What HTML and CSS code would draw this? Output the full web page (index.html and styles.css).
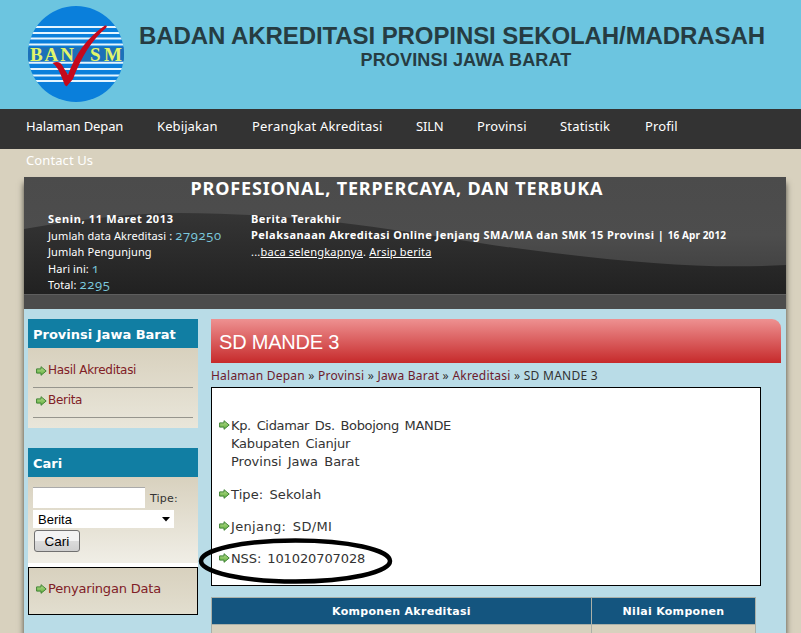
FILE: index.html
```html
<!DOCTYPE html>
<html lang="id">
<head>
    <meta charset="UTF-8">
    <title>SD MANDE 3 | Badan Akreditasi Propinsi Sekolah/Madrasah</title>
    <link rel="stylesheet" href="styles.css">
</head>
<body>
    <svg width="0" height="0" class="defs">
        <linearGradient id="green" x1="0" y1="0" x2="0" y2="1">
            <stop offset="0" stop-color="#b5dc8c"/>
            <stop offset="1" stop-color="#5fae3c"/>
        </linearGradient>
        <symbol id="arrow" viewBox="0 0 11 10">
            <path d="M.6 2.9H5V.7L10.2 5 5 9.3V7.1H.6z" fill="url(#green)" stroke="#3f8434" stroke-width="1"/>
        </symbol>
    </svg>

    <!-- Header -->
    <div class="header">
        <svg class="logo" width="98" height="98" viewBox="0 0 98 98">
            <clipPath id="disc"><circle cx="49" cy="49" r="48"/></clipPath>
            <circle cx="49" cy="49" r="48" fill="#0a7fdb"/>
            <g clip-path="url(#disc)">
                <path d="M0 22H98M0 28H98M0 33.5H98M0 39.5H98M0 57.7H98M0 64H98M0 70.5H98M0 76H98" stroke="#e4f5ff" stroke-width="2.2"/>
                <rect x="0" y="42" width="98" height="14.5" fill="#1c70b8"/>
            </g>
            <text x="3" y="55.5" class="logo-text" textLength="44" lengthAdjust="spacing">BAN</text>
            <text x="63" y="55.5" class="logo-text" textLength="32" lengthAdjust="spacing">SM</text>
            <path d="M25.500 58Q32 55 35 60L41 70Q52 38 78 20.500Q81 20 79 23Q58 41 46 74L40 81Q38 82 37 78Q31 61 25.500 58z" fill="#c4091c"/>
        </svg>
        <div class="titles">
            <h1>BADAN AKREDITASI PROPINSI SEKOLAH/MADRASAH</h1>
            <h2>PROVINSI JAWA BARAT</h2>
        </div>
    </div>

    <!-- Menu -->
    <ul class="menu">
        <li class="depan">Halaman Depan</li>
        <li class="kebijakan">Kebijakan</li>
        <li class="perangkat">Perangkat Akreditasi</li>
        <li class="siln">SILN</li>
        <li class="provinsi">Provinsi</li>
        <li class="statistik">Statistik</li>
        <li>Profil</li>
        <li>Contact Us</li>
    </ul>

    <div class="wrapper">
        <div class="banner">
            <svg class="wave" width="762" height="117" viewBox="0 0 762 117">
                <defs>
                    <linearGradient id="dark" x1="0" y1="0" x2="0" y2="1">
                        <stop offset="0" stop-color="#353535"/>
                        <stop offset="1" stop-color="#212121"/>
                    </linearGradient>
                </defs>
                <path d="M0 52Q90 36 155 36C320 37 400 61 530 76C620 87 690 92 762 88V117H0z" fill="url(#dark)"/>
            </svg>
            <div class="slogan">PROFESIONAL, TERPERCAYA, DAN TERBUKA</div>
            <div class="info">
                <div class="stats">
                    <div class="bold date">Senin, 11 Maret 2013</div>
                    <div>Jumlah data Akreditasi : <span class="num">279250</span></div>
                    <div>Jumlah Pengunjung</div>
                    <div>Hari ini: <span class="num">1</span></div>
                    <div>Total: <span class="num">2295</span></div>
                </div>
                <div class="news">
                    <div class="bold">Berita Terakhir</div>
                    <div class="bold headline">Pelaksanaan Akreditasi Online Jenjang SMA/MA dan SMK 15 Provinsi | <span class="small">16 Apr 2012</span></div>
                    <div class="more">...<u>baca selengkapnya</u>. <u>Arsip berita</u></div>
                </div>
            </div>
        </div>
        <div class="strip"></div>

        <div class="content">
            <!-- Sidebar -->
            <div class="sidebar">
                <div class="block">
                    <h3>Provinsi Jawa Barat</h3>
                    <ul class="links">
                        <li><svg class="icon" width="11" height="10"><use href="#arrow"/></svg><span>Hasil Akreditasi</span></li>
                        <li><svg class="icon" width="11" height="10"><use href="#arrow"/></svg><span>Berita</span></li>
                    </ul>
                </div>
                <div class="block cari">
                    <h3>Cari</h3>
                    <div class="search">
                        <div class="search-row"><span class="field"></span><span class="label">Tipe:</span></div>
                        <div class="select"><span>Berita</span><svg width="8" height="5" viewBox="0 0 8 5"><path d="M0 0H8L4 4.500z"/></svg></div>
                        <div class="button">Cari</div>
                    </div>
                </div>
                <div class="filter"><svg class="icon" width="11" height="10"><use href="#arrow"/></svg><span>Penyaringan Data</span></div>
            </div>

            <!-- Main -->
            <div class="main">
                <div class="title">SD MANDE 3</div>
                <div class="crumbs"><a>Halaman Depan</a> » <a>Provinsi</a> » <a>Jawa Barat</a> » <a>Akreditasi</a> » SD MANDE 3</div>
                <div class="detail">
                    <div class="item"><svg class="icon" width="11" height="10"><use href="#arrow"/></svg>
                        <div><span class="alamat">Kp. Cidamar Ds. Bobojong MANDE</span><br><span class="kabupaten">Kabupaten Cianjur</span><br>Provinsi Jawa Barat</div></div>
                    <div class="item"><svg class="icon" width="11" height="10"><use href="#arrow"/></svg><div class="tipe">Tipe: Sekolah</div></div>
                    <div class="item"><svg class="icon" width="11" height="10"><use href="#arrow"/></svg><div class="jenjang">Jenjang: SD/MI</div></div>
                    <div class="item nss"><svg class="icon" width="11" height="10"><use href="#arrow"/></svg><div>NSS: 101020707028</div></div>
                    <svg class="ring" width="198" height="50" viewBox="0 0 198 50"><ellipse cx="98.500" cy="25" rx="94.500" ry="20.500" fill="none" stroke="#000" stroke-width="4.500"/></svg>
                </div>
                <table>
                    <tr>
                        <th class="komponen">Komponen Akreditasi</th>
                        <th>Nilai Komponen</th>
                    </tr>
                    <tr>
                        <td></td>
                        <td></td>
                    </tr>
                </table>
            </div>
        </div>
    </div>
</body>
</html>
```
FILE: styles.css
```css
body {
    margin: 0;
    height: 633px;
    overflow: hidden;
    background: #d8d1be;
    font-family: "DejaVu Sans", Verdana, sans-serif;
    color: #333;
}
ul {
    list-style: none;
    margin: 0;
    padding: 0;
}
.defs {
    display: block;
}
.header {
    display: flex;
    height: 109px;
    background: #6cc5e0;
    box-sizing: border-box;
    padding: 5px 0 0 27px;
}
.logo-text {
    font: bold 19px "Liberation Serif", serif;
    fill: #e2f56a;
}
.titles {
    width: 626px;
    margin-left: 14px;
    padding-top: 17px;
    font-family: "Liberation Sans", Arial, sans-serif;
    text-align: center;
    white-space: nowrap;
}
h1 {
    margin: 0;
    font-size: 24px;
    line-height: 27px;
    letter-spacing: -0.08px;
    color: #263c42;
}
h2 {
    margin: 0;
    padding-left: 28px;
    font-size: 18px;
    line-height: 23px;
    letter-spacing: 0.15px;
    color: #263c42;
}
.menu {
    display: flex;
    flex-wrap: wrap;
    column-gap: 34px;
    height: 40px;
    box-sizing: border-box;
    padding: 0 90px 0 26px;
    background: #333;
    color: #fff;
    font: 13px/34px "Noto Sans", sans-serif;
    letter-spacing: 0.1px;
    white-space: nowrap;
}
.depan {
    width: 97px;
    letter-spacing: -0.1px;
}
.kebijakan {
    width: 61px;
}
.perangkat {
    width: 130px;
    letter-spacing: 0.2px;
}
.siln {
    width: 27px;
    letter-spacing: -0.2px;
}
.provinsi {
    width: 49px;
    letter-spacing: 0.2px;
}
.statistik {
    width: 51px;
    letter-spacing: 0.2px;
}
.wrapper {
    width: 762px;
    height: 456px;
    margin: 28px 0 0 24px;
    box-shadow: 0 6px 6px #4a473f;
    background: #b9dce7;
}
.banner {
    position: relative;
    height: 117px;
    background: linear-gradient(#4b4b4b, #4d4d4d 50%, #3b3b3b);
    color: #fff;
    font: 11px/16.5px "Noto Sans", sans-serif;
    white-space: nowrap;
}
.wave {
    position: absolute;
    left: 0;
    top: 0;
}
.slogan {
    position: relative;
    width: 746px;
    text-align: center;
    font-weight: bold;
    font-size: 18px;
    line-height: 23px;
    letter-spacing: 0.83px;
}
.info {
    position: relative;
    display: flex;
    padding: 11px 0 0 24px;
}
.stats {
    width: 203px;
    letter-spacing: 0.1px;
}
.bold {
    font-weight: bold;
    letter-spacing: 0.55px;
}
.date {
    letter-spacing: 0.65px;
}
.headline {
    letter-spacing: 0.47px;
    margin-top: -1px;
    margin-bottom: 1px;
}
.more {
    letter-spacing: 0.22px;
}
.num {
    color: #7cc9de;
    font-family: "Open Sans", sans-serif;
    font-size: 13px;
    line-height: 10px;
    letter-spacing: 0.7px;
    font-variant-numeric: oldstyle-nums;
}
.small {
    font-size: 10px;
    letter-spacing: 0.1px;
}
.strip {
    height: 14px;
    background: #4c4c4c;
    border-top: 1px solid #5e5e5e;
}
.content {
    display: flex;
    gap: 13px;
    padding: 10px 5px 0 4px;
}
.sidebar {
    width: 170px;
}
h3 {
    margin: 0;
    height: 29px;
    padding-left: 5px;
    background: #117ea3;
    color: #fff;
    font-size: 13px;
    line-height: 31px;
}
.links {
    height: 80px;
    box-sizing: border-box;
    padding: 10px 5px 0;
    background: linear-gradient(#d8d1be, #e9e6da);
    color: #802026;
    font-size: 12px;
    letter-spacing: -0.3px;
}
.links li {
    display: flex;
    align-items: center;
    height: 29px;
    padding-left: 3px;
    border-bottom: 1px solid #96958d;
}
.icon {
    flex-shrink: 0;
}
.links .icon, .filter .icon {
    margin: -4px 1px 0 0;
}
.links span {
    margin-top: -5px;
}
.cari {
    margin-top: 20px;
}
.search {
    height: 86px;
    box-sizing: border-box;
    padding: 10px 5px 0;
    background: linear-gradient(#d8d1be, #f0eee6);
}
.search-row {
    display: flex;
    gap: 5px;
    height: 23px;
}
.field {
    width: 112px;
    height: 20px;
    background: #fff;
    border-top: 1px solid #aaa;
}
.label {
    font-size: 11px;
    line-height: 24px;
    letter-spacing: 0.2px;
}
.select {
    display: flex;
    align-items: center;
    justify-content: space-between;
    width: 132px;
    height: 18px;
    padding: 0 4px 0 5px;
    background: #fff;
    color: #000;
    font: 13px "Liberation Sans", Arial, sans-serif;
}
.button {
    width: 44px;
    height: 20px;
    margin: 2px 0 0 1px;
    border: 1px solid #707070;
    border-radius: 3px;
    background: linear-gradient(#f3f3f3 50%, #dcdcdc 50%, #cfcfcf);
    color: #000;
    text-align: center;
    font: 13.5px/21px "Liberation Sans", Arial, sans-serif;
}
.filter {
    display: flex;
    align-items: center;
    height: 46px;
    margin-top: 4px;
    padding-left: 7px;
    border: 1px solid #000;
    background: linear-gradient(#d8d1be, #e2decf);
    box-shadow: 0 -4px #fff;
    color: #802026;
    font-size: 13px;
    letter-spacing: -0.2px;
}
.filter span {
    margin-top: -6px;
}
.main {
    width: 570px;
}
.title {
    height: 44px;
    padding-left: 8px;
    border-radius: 0 9px 0 0;
    background: linear-gradient(#ee9191, #c62a2b);
    color: #fff;
    font: 20px/46px "Liberation Sans", Arial, sans-serif;
    letter-spacing: -0.2px;
}
.crumbs {
    height: 24px;
    font: 12px/25px "Noto Sans", sans-serif;
    letter-spacing: 0.27px;
    white-space: nowrap;
}
.crumbs a {
    color: #6d1a2c;
    letter-spacing: 0.22px;
}
.detail {
    position: relative;
    width: 534px;
    height: 168px;
    padding: 29px 7px 0;
    border: 1px solid #000;
    background: #fff;
    font-size: 13px;
    line-height: 18px;
    word-spacing: 2px;
}
.item {
    display: flex;
    gap: 1px;
    margin-bottom: 14.5px;
}
.item .icon {
    margin-top: 3px;
}
.alamat {
    letter-spacing: -0.35px;
}
.kabupaten {
    letter-spacing: -0.2px;
}
.tipe {
    letter-spacing: 0.1px;
}
.jenjang {
    letter-spacing: 0.35px;
}
.nss {
    margin-top: -1px;
    letter-spacing: -0.1px;
}
.ring {
    position: absolute;
    left: -15px;
    top: 148px;
}
table {
    width: 545px;
    margin-top: 11px;
    border-collapse: collapse;
    background: #d8d1be;
}
th, td {
    height: 26px;
    padding: 0;
    border: 1px solid #aab0a8;
}
th {
    background: #14557f;
    color: #fff;
    font-size: 11px;
    letter-spacing: 0.3px;
}
.komponen {
    width: 379px;
}
```
